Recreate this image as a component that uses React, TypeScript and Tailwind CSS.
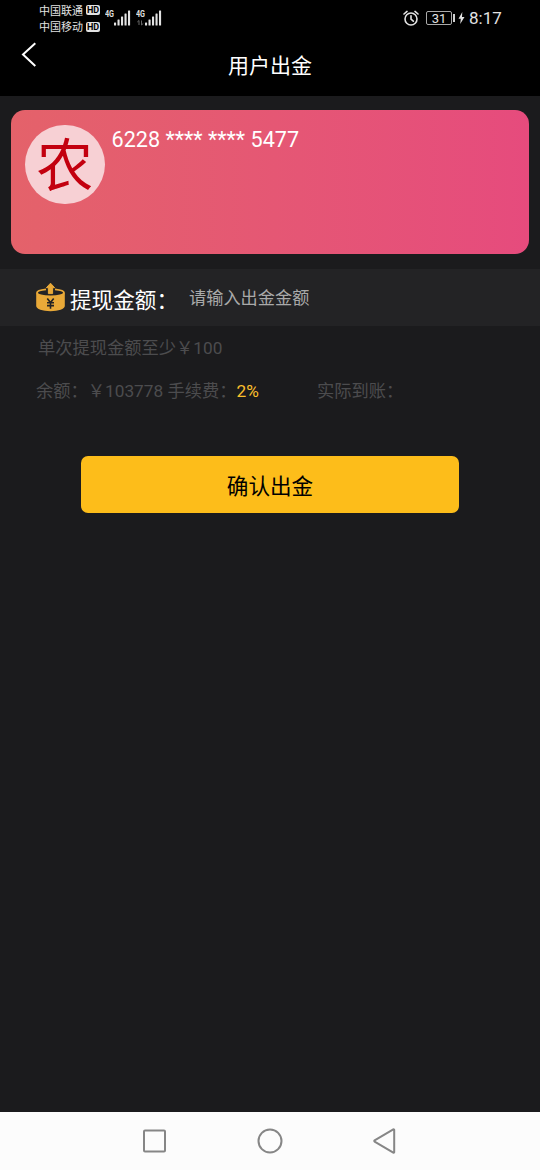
const carriers = ['中国联通', '中国移动']

const bars = [3, 6, 9, 12, 15]

export default function App() {
  return (
    <div className="w-[540px] h-[1170px] flex flex-col overflow-hidden bg-[#1b1b1d] font-['Roboto','Noto_Sans_CJK_SC',sans-serif] text-white">
      <header className="h-24 shrink-0 bg-black">
        <StatusBar />
        <div className="h-[60px] grid grid-cols-[60px_1fr_60px]">
          <button aria-label="返回" className="pl-[21px] pt-[6px] self-start">
            <svg width="16" height="26" viewBox="0 0 16 26" fill="none" stroke="#fff" strokeWidth="2">
              <path d="M14.3 1.3 2 12.5l12.3 11.6" />
            </svg>
          </button>
          <h1 className="text-center text-[21px] leading-[30px] pt-[15px]">用户出金</h1>
        </div>
      </header>

      <main className="flex-1">
        <section className="mx-[11px] mt-[14.4px] h-36 rounded-[14px] bg-linear-to-r from-[#e4626a] to-[#e64b7d] pl-[14px] pt-[14.4px] flex items-start">
          <div className="w-[79.5px] h-[79.5px] rounded-full bg-[#f7d0d4] flex items-center justify-center text-[57px] leading-none text-[#c3000f] pt-[4px]">
            农
          </div>
          <span className="ml-[7px] pt-px text-[21.6px] leading-[28px] whitespace-nowrap">6228 **** **** 5477</span>
        </section>

        <section className="mt-[14.6px] h-[57px] bg-[#232325] pl-[36px] flex items-center">
          <WithdrawIcon />
          <label className="ml-[5px] w-[119px] text-[21.6px] leading-[30px] pt-[7px] whitespace-nowrap">提现金额：</label>
          <span className="text-[17.2px] leading-6 pt-[2px] text-[#a9a9a9]">请输入出金金额</span>
        </section>

        <p className="mt-[10px] ml-[38px] text-[17.25px] leading-6 text-[#4c4c4e]">单次提现金额至少￥100</p>
        <div className="mt-[19px] ml-[36px] flex text-[17.25px] leading-6 text-[#4c4c4e] whitespace-nowrap">
          <p className="w-[281px]">
            余额：￥103778 手续费：<span className="text-[#fabf2c]">2%</span>
          </p>
          <p>实际到账：</p>
        </div>

        <button className="block mx-auto mt-[53px] w-[378px] h-[57.5px] pt-[4px] rounded-[7px] bg-[#fdbd1a] text-[21.6px] leading-[30px] text-black">
          确认出金
        </button>
      </main>

      <nav className="h-[58px] shrink-0 bg-[#fcfcfc] flex justify-center items-center gap-[89px]">
        <svg width="26" height="26" viewBox="0 0 26 26" fill="none" stroke="#868686" strokeWidth="2">
          <rect x="2" y="2.5" width="21" height="21" rx="1" />
        </svg>
        <svg width="26" height="26" viewBox="0 0 26 26" fill="none" stroke="#868686" strokeWidth="2">
          <circle cx="13" cy="13" r="11.5" />
        </svg>
        <svg width="26" height="26" viewBox="0 0 26 26" fill="none" stroke="#868686" strokeWidth="2" strokeLinejoin="round">
          <path d="M22.2 1.8v22.4a.6.6 0 0 1-.9.4L2.6 13.6a.7.7 0 0 1 0-1.2L21.3 1.4a.6.6 0 0 1 .9.4Z" />
        </svg>
      </nav>
    </div>
  )
}

function StatusBar() {
  return (
    <div className="h-9 pl-[39px] pr-[38px] flex justify-between text-[#e2e2e2]">
      <div className="flex">
        <div className="pt-[2px]">
          {carriers.map(name => (
            <div key={name} className="h-[16.5px] flex items-center gap-[3px] text-[11px] leading-none">
              <span className="pt-[2px]">{name}</span>
              <span className="w-[14px] h-[10px] rounded-[2px] bg-[#e2e2e2] text-black text-[9px] leading-[10.5px] font-bold text-center">
                HD
              </span>
            </div>
          ))}
        </div>
        <Signal className="ml-[5px]" />
        <Signal className="ml-[5px]" data />
      </div>

      <div className="flex items-center">
        <svg width="16" height="17" viewBox="0 0 16 17" fill="none" stroke="currentColor" strokeWidth="1.6" strokeLinecap="round">
          <circle cx="8" cy="9" r="6" />
          <path d="M8 5.7v3.5l2.3 2M1 4 4 1.4M15 4 12 1.4" />
        </svg>
        <div className="ml-[7px] w-[26px] h-[14px] rounded-[2px] border border-[#aaaaaa] text-[13px] leading-[13px] text-center">
          31
        </div>
        <span className="ml-px w-[2px] h-[8px] bg-[#d0d0d0]" />
        <svg className="ml-[3px]" width="7" height="12" viewBox="0 0 7 12" fill="currentColor">
          <path d="M4.3 0 .5 6.8h2.3L2.2 12l4.3-7H4Z" />
        </svg>
        <span className="ml-[4px] pt-px w-[33px] text-[17px] leading-none whitespace-nowrap">8:17</span>
      </div>
    </div>
  )
}

function Signal({ className, data }: { className: string; data?: boolean }) {
  return (
    <svg className={className} width="26" height="30" viewBox="0 0 26 30" fill="#e2e2e2">
      <text x="0" y="17.3" fontSize="9" fontWeight="700" textLength="9" lengthAdjust="spacingAndGlyphs">4G</text>
      {bars.map((h, i) => (
        <rect key={h} x={9 + i * 3.5} y={25.5 - h} width="2.1" height={h} rx="0.5" />
      ))}
      {data && <path d="M3 25v-4.5L1.3 22M5.5 20.5V25l1.7-1.5" fill="none" stroke="#666" />}
    </svg>
  )
}

function WithdrawIcon() {
  return (
    <svg width="29" height="29" viewBox="0 0 29 29" fill="none">
      <path
        d="M10 6.3C4.8 6.8 1 8 1 9.8c0 2.2 6 3.7 13.5 3.7S28 12 28 9.8c0-1.8-3.8-3-9-3.5"
        stroke="#e9a938"
        strokeWidth="1.8"
      />
      <path d="M.2 9.8c1.2 2.4 7.2 3.7 14.3 3.7s13.1-1.3 14.3-3.7V23c0 3-6.3 5.2-14.3 5.2S.2 26 .2 23Z" fill="#e9a938" />
      <path d="M14.5.2 18.6 4.7h-2v5.9h-4.2V4.7h-2Z" fill="#e9a938" stroke="#e9a938" strokeLinejoin="round" />
      <path d="m11.3 15.4 3.2 4.2 3.2-4.2M14.5 19.6v6.2M11 19.8h7M11 22.6h7" stroke="#232325" strokeWidth="1.6" />
    </svg>
  )
}
